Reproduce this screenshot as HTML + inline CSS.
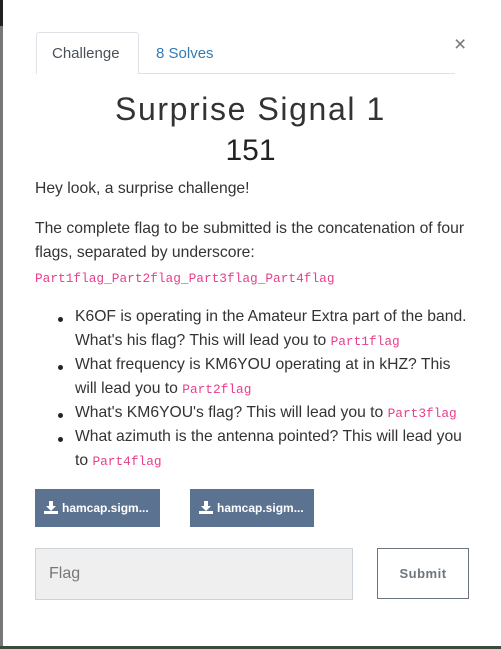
<!DOCTYPE html>
<html><head><style>
body{margin:0;width:501px;height:649px;background:#fff;position:relative;overflow:hidden;font-family:"Liberation Sans",sans-serif;color:#212529}
.a{position:absolute}
.t{font-size:15.7px;white-space:nowrap;left:35px;color:#333}
code{font-family:"Liberation Mono",monospace;color:#e83e8c;font-size:12.8px}
.li{left:75px}
.dot{position:absolute;left:-17px;top:9px;width:5px;height:5px;border-radius:50%;background:#212529}
</style></head><body>
<div class="a" style="left:0;top:0;width:3px;height:649px;background:#777"></div>
<div class="a" style="left:0;top:0;width:3px;height:26px;background:#222"></div>
<div class="a" style="left:0;top:646px;width:501px;height:3px;background:#3c4a3c"></div>

<div class="a" style="left:36px;top:32px;width:101px;height:41px;border:1px solid #dee2e6;border-bottom:none;border-radius:3px 3px 0 0;background:#fff"></div>
<div class="a" style="left:36px;top:73px;width:419px;height:1px;background:#dee2e6"></div>
<div class="a" style="left:37px;top:73px;width:101px;height:1px;background:#fff"></div>
<div class="a" style="left:52px;top:45px;font-size:15px;color:#495057">Challenge</div>
<div class="a" style="left:156px;top:45px;font-size:15px;color:#337ab7">8 Solves</div>
<div class="a" style="left:454px;top:33px;font-size:21px;color:#777">×</div>

<div class="a" style="left:0;width:501px;top:91px;text-align:center;font-size:32px;font-weight:300;color:#333;letter-spacing:1.6px">Surprise Signal 1</div>
<div class="a" style="left:0;width:501px;top:134px;text-align:center;font-size:30px;color:#222">151</div>

<div class="a t" style="top:180px">Hey look, a surprise challenge!</div>
<div class="a t" style="top:220px">The complete flag to be submitted is the concatenation of four</div>
<div class="a t" style="top:244px">flags, separated by underscore:</div>
<div class="a t" style="top:269px"><code>Part1flag_Part2flag_Part3flag_Part4flag</code></div>

<div class="a t li" style="top:308px"><span class="dot"></span>K6OF is operating in the Amateur Extra part of the band.</div>
<div class="a t li" style="top:332px">What's his flag? This will lead you to <code>Part1flag</code></div>
<div class="a t li" style="top:356px"><span class="dot"></span>What frequency is KM6YOU operating at in kHZ? This</div>
<div class="a t li" style="top:380px">will lead you to <code>Part2flag</code></div>
<div class="a t li" style="top:404px"><span class="dot"></span>What's KM6YOU's flag? This will lead you to <code>Part3flag</code></div>
<div class="a t li" style="top:428px"><span class="dot"></span>What azimuth is the antenna pointed? This will lead you</div>
<div class="a t li" style="top:452px">to <code>Part4flag</code></div>

<div class="a" style="left:35px;top:489px;width:125px;height:38px;background:#5b7290;color:#fff;font-size:12px;font-weight:bold;line-height:38px">
<svg class="a" style="left:9px;top:12px" width="14" height="13" viewBox="0 0 14 13"><path d="M5 0h4v5h3L7 10 2 5h3z" fill="#fff"/><rect x="0" y="10" width="14" height="3" fill="#fff"/></svg>
<span class="a" style="left:27px;top:0">hamcap.sigm...</span></div>
<div class="a" style="left:190px;top:489px;width:124px;height:38px;background:#5b7290;color:#fff;font-size:12px;font-weight:bold;line-height:38px">
<svg class="a" style="left:9px;top:12px" width="14" height="13" viewBox="0 0 14 13"><path d="M5 0h4v5h3L7 10 2 5h3z" fill="#fff"/><rect x="0" y="10" width="14" height="3" fill="#fff"/></svg>
<span class="a" style="left:27px;top:0">hamcap.sigm...</span></div>

<div class="a" style="left:35px;top:548px;width:318px;height:52px;background:#efefef;border:1px solid #ccd3da;box-sizing:border-box;"></div>
<div class="a" style="left:49px;top:565px;font-size:16px;color:#777">Flag</div>
<div class="a" style="left:377px;top:548px;width:92px;height:51px;border:1px solid #6c757d;box-sizing:border-box;text-align:center;line-height:49px;font-size:13px;font-weight:bold;color:#6c757d;letter-spacing:0.5px">Submit</div>
</body></html>
